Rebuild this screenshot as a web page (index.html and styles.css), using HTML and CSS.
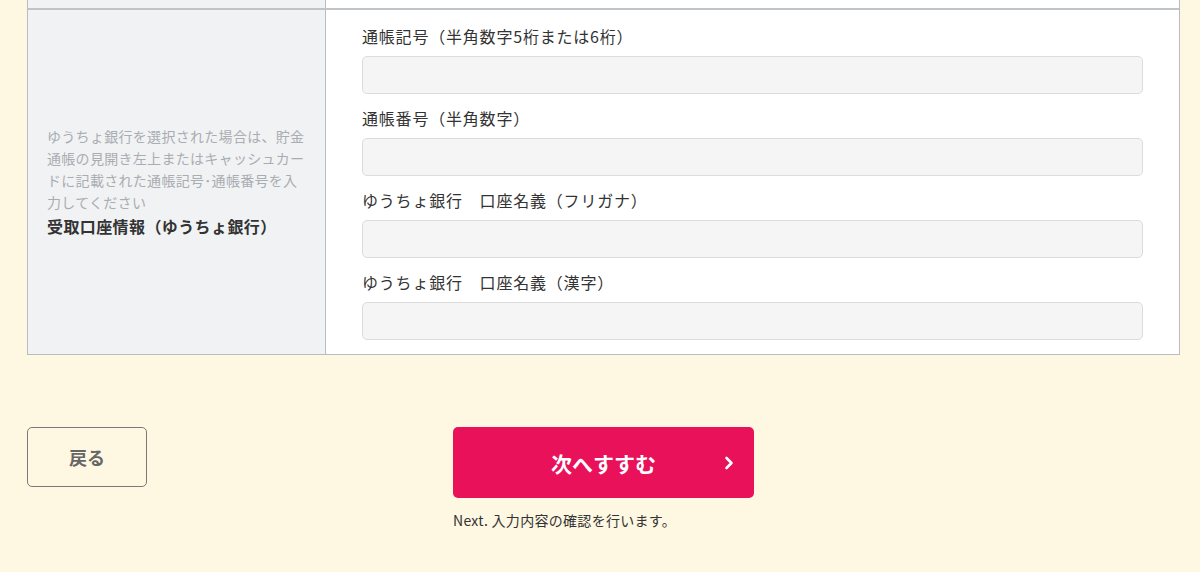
FILE: index.html
```html
<!DOCTYPE html>
<html lang="ja">
<head>
<meta charset="utf-8">
<title>受取口座情報</title>
<link rel="stylesheet" href="styles.css">
</head>
<body>
<div class="page">
  <div class="table">
    <div class="row row-top">
      <div class="cell-head cell-empty"></div>
      <div class="cell-body cell-empty"></div>
    </div>
    <div class="row">
      <div class="cell-head">
        <p class="note">ゆうちょ銀行を選択された場合は、貯金通帳の見開き左上またはキャッシュカードに記載された通帳記号･通帳番号を入力してください</p>
        <p class="head-label">受取口座情報（ゆうちょ銀行）</p>
      </div>
      <div class="cell-body">
        <div class="field">
          <label class="field-label">通帳記号（半角数字5桁または6桁）</label>
          <div class="input"></div>
        </div>
        <div class="field">
          <label class="field-label">通帳番号（半角数字）</label>
          <div class="input"></div>
        </div>
        <div class="field">
          <label class="field-label">ゆうちょ銀行　口座名義（フリガナ）</label>
          <div class="input"></div>
        </div>
        <div class="field">
          <label class="field-label">ゆうちょ銀行　口座名義（漢字）</label>
          <div class="input"></div>
        </div>
      </div>
    </div>
  </div>
  <div class="actions">
    <button class="btn-back">戻る</button>
    <div class="next-wrap">
      <button class="btn-next">次へすすむ<svg class="chev" width="10" height="14" viewBox="0 0 10 14"><path d="M2.5 2 L7.5 7 L2.5 12" fill="none" stroke="#fff" stroke-width="2.6" stroke-linecap="round" stroke-linejoin="round"/></svg></button>
      <p class="caption">Next. 入力内容の確認を行います。</p>
    </div>
    <div></div>
  </div>
</div>
</body>
</html>
```

FILE: styles.css
```css
* { box-sizing: border-box; }
html, body { margin: 0; padding: 0; }
body {
  background: #fef7e2;
  font-family: "Noto Sans CJK JP", "Noto Sans", sans-serif;
  color: #333;
  height: 572px;
  overflow: hidden;
}
.page {
  padding: 0 20px 0 27px;
}
.table {
  border-left: 1px solid #b9bdc2;
  border-right: 1px solid #b9bdc2;
  border-bottom: 1px solid #b9bdc2;
}
.row {
  display: flex;
}
.row-top {
  height: 10px;
  border-bottom: 2px solid #bfc4c9;
}
.cell-head {
  width: 298px;
  flex: none;
  background: #f1f2f4;
  border-right: 1px solid #b9bdc2;
  padding: 20px 19px;
  display: flex;
  flex-direction: column;
  justify-content: center;
}
.cell-body {
  flex: 1;
  background: #fff;
  padding: 14px 36px 14px 36px;
}
.cell-empty {
  padding: 0;
}
.note {
  margin: 0;
  font-size: 14px;
  line-height: 22px;
  color: #a9adb2;
  letter-spacing: 0.3px;
}
.head-label {
  margin: 0;
  font-size: 16px;
  line-height: 26px;
  font-weight: bold;
  color: #333;
  letter-spacing: 0.4px;
}
.field {
  margin-bottom: 12px;
}
.field:last-child { margin-bottom: 0; }
.field-label {
  display: block;
  font-size: 16px;
  line-height: 24px;
  color: #333;
  margin-bottom: 8px;
  letter-spacing: 0.8px;
}
.input {
  height: 38px;
  background: #f5f5f5;
  border: 1px solid #dcdcdc;
  border-radius: 5px;
}
.actions {
  display: grid;
  grid-template-columns: 1fr auto 1fr;
  margin-top: 72px;
  align-items: start;
}
.btn-back {
  justify-self: start;
  width: 120px;
  height: 60px;
  background: transparent;
  border: 1px solid #7a7a7a;
  border-radius: 5px;
  font-family: inherit;
  font-size: 18px;
  font-weight: bold;
  color: #666;
  padding: 0;
}
.next-wrap {
  width: 301px;
}
.btn-next {
  position: relative;
  width: 301px;
  height: 71px;
  background: #e8115a;
  border: none;
  border-radius: 5px;
  color: #fff;
  font-family: inherit;
  font-size: 21px;
  font-weight: bold;
  padding: 0;
}
.chev {
  position: absolute;
  right: 20px;
  top: 29px;
}
.caption {
  margin: 12px 0 0;
  font-size: 14px;
  line-height: 20px;
  color: #333;
  letter-spacing: 0.3px;
}
```
